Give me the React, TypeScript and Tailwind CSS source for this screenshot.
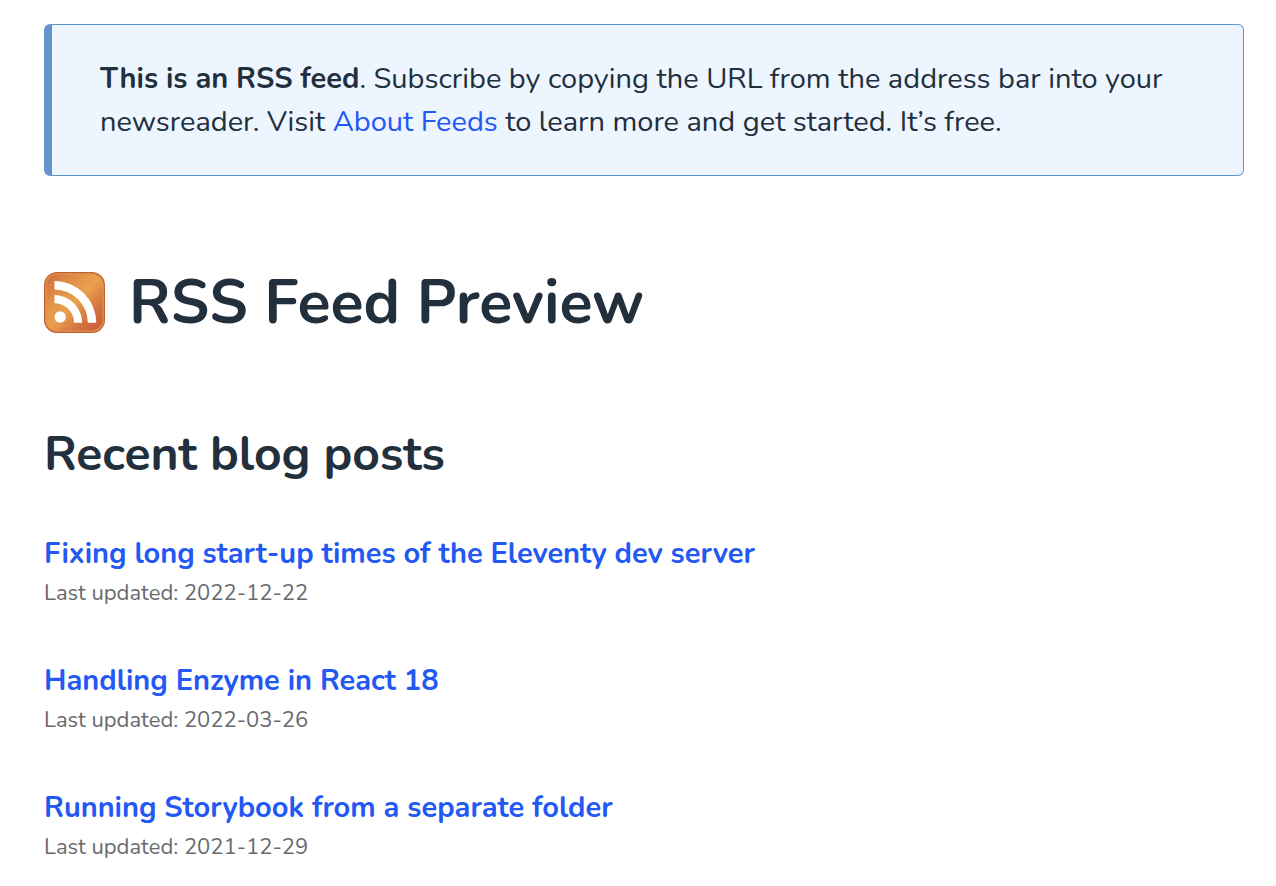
const posts = [
  { title: "Fixing long start-up times of the Eleventy dev server", date: "2022-12-22" },
  { title: "Handling Enzyme in React 18", date: "2022-03-26" },
  { title: "Running Storybook from a separate folder", date: "2021-12-29" },
];

function FeedIcon() {
  return (
    <svg viewBox="0 0 256 256" className="size-[61px] shrink-0" aria-hidden="true">
      <defs>
        <linearGradient id="feed" x1="0.085" y1="0.085" x2="0.915" y2="0.915">
          <stop offset="0" stopColor="#D37740" />
          <stop offset="0.1071" stopColor="#DA8344" />
          <stop offset="0.3503" stopColor="#E5994B" />
          <stop offset="0.5" stopColor="#EAA14F" />
          <stop offset="0.7016" stopColor="#DA8244" />
          <stop offset="0.8866" stopColor="#CE6C3D" />
          <stop offset="1" stopColor="#C9633A" />
        </linearGradient>
      </defs>
      <rect width="256" height="256" rx="55" fill="#BE632E" />
      <rect x="5" y="5" width="246" height="246" rx="50" fill="#DF9455" />
      <rect x="10" y="10" width="236" height="236" rx="47" fill="url(#feed)" />
      <circle cx="68" cy="189" r="24" fill="#FFF" />
      <path d="M160 213h-34a82 82 0 0 0-82-82V97a116 116 0 0 1 116 116z" fill="#FFF" />
      <path d="M184 213A140 140 0 0 0 44 73V38a175 175 0 0 1 175 175z" fill="#FFF" />
    </svg>
  );
}

export default function App() {
  return (
    <main className="min-h-screen bg-white pt-6 pr-8 pb-6 pl-11 font-['Nunito','Open_Sans',sans-serif] text-[29px] text-[#222f3d]">
      <nav className="rounded-md border border-l-8 border-[#6196cc] bg-[#edf5ff] py-8 pr-12 pl-12 leading-[43px]">
        <p>
          <strong>This is an RSS feed</strong>. Subscribe by copying the URL from the address bar into your newsreader. Visit{" "}
          <a href="#about" className="text-[#2458f4]">About Feeds</a> to learn more and get started. It’s free.
        </p>
      </nav>
      <header className="mt-24 flex items-center gap-6">
        <FeedIcon />
        <h1 className="text-[61px] leading-[58px] font-bold">RSS Feed Preview</h1>
      </header>
      <h2 className="mt-[91px] text-5xl leading-[60px] font-bold">Recent blog posts</h2>
      {posts.map((post) => (
        <article key={post.date} className="mt-12">
          <h3 className="leading-[43px] font-bold">
            <a href="#post" className="text-[#2458f4]">{post.title}</a>
          </h3>
          <p className="text-[22px] leading-9 text-[#686a6d]">Last updated: {post.date}</p>
        </article>
      ))}
    </main>
  );
}
